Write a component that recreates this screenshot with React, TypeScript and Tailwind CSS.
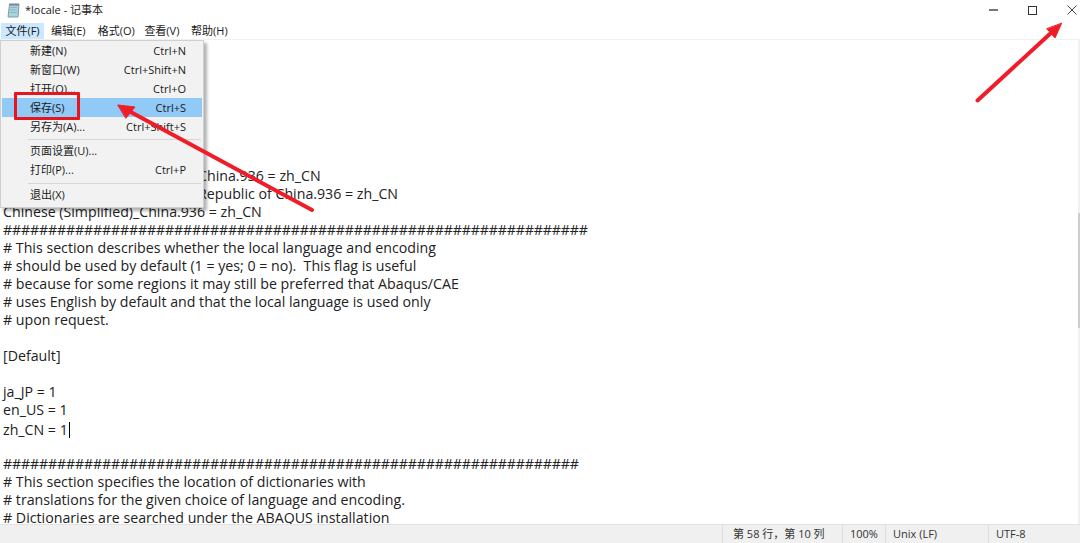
const sans = '"Open Sans", "Noto Sans CJK SC", sans-serif';

const menuBar = ['文件(F)', '编辑(E)', '格式(O)', '查看(V)', '帮助(H)'];

const fileMenu = [
  { label: '新建(N)', key: 'Ctrl+N' },
  { label: '新窗口(W)', key: 'Ctrl+Shift+N' },
  { label: '打开(O)...', key: 'Ctrl+O' },
  { label: '保存(S)', key: 'Ctrl+S', active: true },
  { label: '另存为(A)...', key: 'Ctrl+Shift+S' },
  { sep: 'mt-[3px] mb-px' },
  { label: '页面设置(U)...' },
  { label: '打印(P)...', key: 'Ctrl+P' },
  { sep: 'mt-[4px] mb-px' },
  { label: '退出(X)' },
];

const lines = [
  '', '', '', '', '', '', '',
  "Chinese (Simplified)_People's China.936 = zh_CN",
  "Chinese (Simplified)_People's Republic of China.936 = zh_CN",
  'Chinese (Simplified)_China.936 = zh_CN',
  '#'.repeat(65),
  '# This section describes whether the local language and encoding',
  '# should be used by default (1 = yes; 0 = no).  This flag is useful',
  '# because for some regions it may still be preferred that Abaqus/CAE',
  '# uses English by default and that the local language is used only',
  '# upon request.',
  '',
  '[Default]',
  '',
  'ja_JP = 1',
  'en_US = 1',
  'zh_CN = 1',
  '',
  '#'.repeat(64),
  '# This section specifies the location of dictionaries with',
  '# translations for the given choice of language and encoding.',
  '# Dictionaries are searched under the ABAQUS installation',
];

function NotepadIcon() {
  return (
    <svg width="13" height="15" viewBox="0 0 13 15" className="shrink-0">
      <path d="M2.500 1.500h9.500l-1 12.500H1z" fill="#a9d3df" stroke="#7d9ba8" />
      <path d="M3.500 4.500h6.500M3.300 7h6.500M3 9.500h6.500" stroke="#8db4c2" />
      <path d="M3 0v3M5 0v3M7 0v3M9 0v3M11 0v3" stroke="#66808c" />
    </svg>
  );
}

function Arrows() {
  return (
    <svg width="1080" height="543" viewBox="0 0 1080 543" className="pointer-events-none absolute left-0 top-0">
      <g fill="#f01c28" stroke="#f01c28" strokeLinecap="round">
        <path d="M312 210L127 110" strokeWidth="4" fill="none" />
        <path d="M118 105L135 107L126 118Z" strokeWidth="1" strokeLinejoin="round" />
        <path d="M977.500 100.500L1052 32" strokeWidth="4" fill="none" />
        <path d="M1061.500 23.500L1055 38L1047 29Z" strokeWidth="1" strokeLinejoin="round" />
      </g>
    </svg>
  );
}

export default function App() {
  return (
    <div className="relative flex h-[543px] w-[1080px] flex-col overflow-hidden bg-white text-[#1a1a1a]" style={{ fontFamily: sans }}>
      {/* title bar */}
      <div className="flex h-5 items-center pl-[7px]">
        <NotepadIcon />
        <span className="ml-[5px] text-[11px]">*locale - 记事本</span>
        <div className="ml-auto flex items-center">
          <div className="mr-[30px] h-[2px] w-[9px] bg-[#777]" />
          <div className="mr-[30px] h-[9px] w-[9px] border border-[#333]" />
          <svg width="10" height="10" viewBox="0 0 10 10" className="mr-[3px]">
            <path d="M.5.500l9 9M9.500.500l-9 9" stroke="#444" fill="none" />
          </svg>
        </div>
      </div>

      {/* menu bar */}
      <div className="flex h-[20px] items-end border-b border-[#f0f0f0] text-[11px]">
        <div className="ml-px flex h-[16px] w-[43px] items-center justify-center bg-[#cce8ff]">{menuBar[0]}</div>
        <div className="ml-[7px] flex h-[16px] items-center">
          {menuBar.slice(1).map((m) => (
            <span key={m} className="w-[46.700px] whitespace-nowrap">{m}</span>
          ))}
        </div>
      </div>

      {/* editor */}
      <div className="relative min-h-0 flex-1 overflow-hidden pl-[3px] pt-px text-[14.200px] leading-[18px] text-[#222]">
        {lines.map((line, i) => (
          <div key={i} className={`h-[18px] whitespace-pre ${line.startsWith('##') ? 'tracking-[-0.170px]' : ''}`}>
            {line}
            {line === 'zh_CN = 1' && <span className="ml-px inline-block h-[16px] w-px translate-y-[3px] bg-black" />}
          </div>
        ))}
        <div className="absolute inset-y-0 right-0 w-[2px] bg-[#f1f1f1]">
          <div className="mt-[173px] h-[115px] w-full bg-[#cdcdcd]" />
        </div>
      </div>

      {/* status bar */}
      <div className="flex h-[19px] items-center border-t border-[#e2e2e2] bg-[#f0f0f0] text-[11px] text-[#333]">
        <div className="ml-[722px] flex h-full w-[120px] items-center whitespace-nowrap border-l border-[#dcdcdc] pl-[10px]">第 58 行，第 10 列</div>
        <div className="flex h-full w-[43px] items-center border-l border-[#dcdcdc] pl-[7px]">100%</div>
        <div className="flex h-full w-[103px] items-center border-l border-[#dcdcdc] pl-[7px]">Unix (LF)</div>
        <div className="flex h-full flex-1 items-center border-l border-[#dcdcdc] pl-[7px]">UTF-8</div>
      </div>

      {/* file menu */}
      <div className="absolute left-0 top-[40px] w-[204px] border border-[#cfcfcf] bg-[#f2f2f2] px-[1px] pb-[3px] text-[11px] shadow-[3px_3px_3px_rgba(0,0,0,0.3)]">
        {fileMenu.map((item, i) =>
          item.sep ? (
            <div key={i} className={`${item.sep} ml-[26px] mr-[1px] h-px bg-[#d7d7d7]`} />
          ) : (
            <div key={i} className={`flex h-[19px] items-center justify-between pl-[28px] pr-[16px] pt-[2px] ${item.active ? 'bg-[#91c9f7]' : ''}`}>
              <span>{item.label}</span>
              <span>{item.key}</span>
            </div>
          ),
        )}
      </div>

      {/* annotation */}
      <div className="absolute left-[14px] top-[92px] h-[28px] w-[66px] rounded-[1px] border-[3px] border-[#e8141f]" />
      <Arrows />
    </div>
  );
}
